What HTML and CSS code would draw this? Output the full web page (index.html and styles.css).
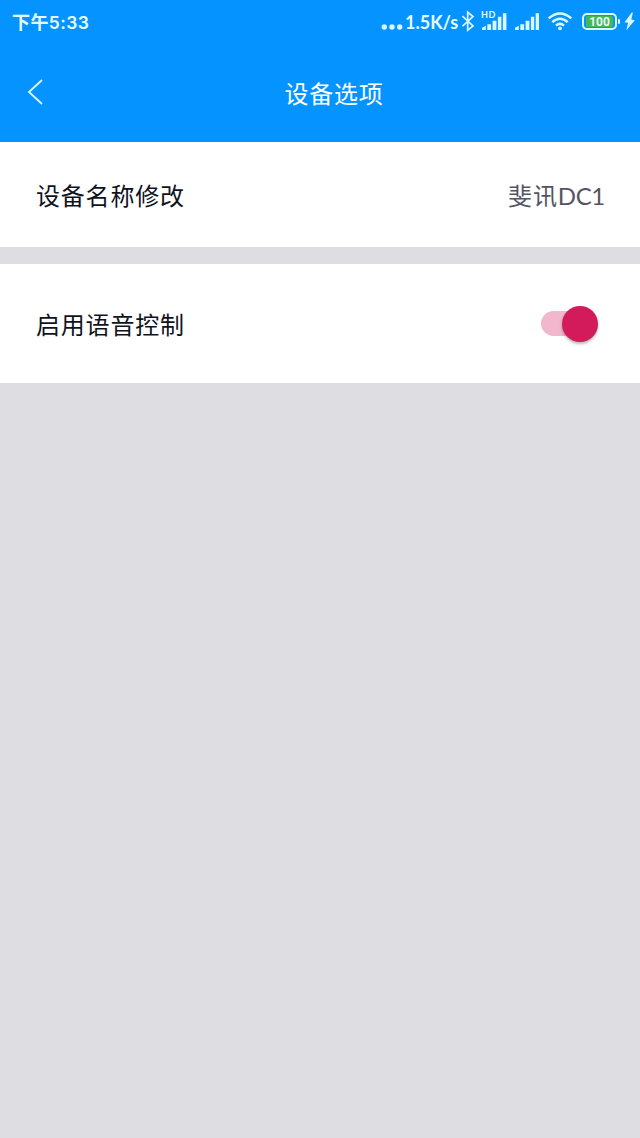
FILE: index.html
```html
<!DOCTYPE html>
<html lang="zh-CN">
<head>
<meta charset="utf-8">
<title>设备选项</title>
<link rel="stylesheet" href="styles.css">
</head>
<body>
<header class="header">
  <div class="status">
    <span class="clock">下午<span class="time">5:33</span></span>
    <div class="indicators">
      <svg class="dots" width="22" height="44" viewBox="0 0 22 44"><circle cx="3.3" cy="27" r="2.7"/><circle cx="11" cy="27" r="2.7"/><circle cx="18.7" cy="27" r="2.7"/></svg>
      <span class="speed">1.5K/s</span>
      <svg class="bluetooth" width="14" height="44" viewBox="0 0 14 44"><path d="M1.5 16.2 12 26 6.7 30.3V12.1L12 16.5 1.5 26.2"/></svg>
      <div class="signal-hd">
        <span class="hd">HD</span>
        <svg width="26" height="44" viewBox="0 0 26 44"><path d="M1 30v-2.3l3.8-2V30zM6.3 24.3h3.8V30H6.3zM11.6 20.8h3.8V30h-3.8zM16.9 16.8h3.5V30h-3.5zM21.9 13.2h3.5V30h-3.5z"/></svg>
      </div>
      <svg class="signal-plain" width="26" height="44" viewBox="0 0 26 44"><path d="M1 30v-2.3l3.8-2V30zM6.3 24.3h3.8V30H6.3zM11.6 20.8h3.8V30h-3.8zM16.9 16.8h3.3V30h-3.3zM21.7 13.2H25V30h-3.3z"/></svg>
      <svg class="wifi" width="26" height="44" viewBox="0 0 26 44"><path d="M1.7 18.4Q13 8.5 24.3 18.4M5.3 22.1Q13 15.3 20.7 22.1M9 25.6Q13 22.2 17 25.6"/><circle cx="13" cy="28.3" r="1.9"/></svg>
      <div class="battery"><span class="charge">100</span></div>
      <svg class="bolt" width="12" height="44" viewBox="0 0 12 44"><path d="M7.8 12.5.5 22.2l3.6.6L2.4 30.2l8.4-10-3.5-.8 1.6-6.9z"/></svg>
    </div>
  </div>
  <nav class="titlebar">
    <svg class="back" width="18" height="28" viewBox="0 0 18 28"><path d="M15 2 2 14l13 12"/></svg>
    <h1 class="title">设备选项</h1>
  </nav>
</header>
<main class="options">
  <div class="row row-name">
    <span class="label">设备名称修改</span>
    <span class="value">斐讯<span class="model">DC1</span></span>
  </div>
  <div class="row row-voice">
    <span class="label">启用语音控制</span>
    <div class="switch"><div class="thumb"></div></div>
  </div>
</main>
</body>
</html>
```
FILE: styles.css
```css
* { box-sizing: border-box; }
body {
  margin: 0;
  min-height: 1138px;
  background: #dedde2;
  font-family: Lato, "Noto Sans CJK SC", sans-serif;
}
.header {
  height: 142px;
  background: #0594ff;
  color: #fff;
}
.status {
  display: flex;
  justify-content: space-between;
  height: 44px;
  padding: 0 4px 0 12px;
  color: #e5fbff;
}
.clock {
  font: 700 18px/43px "Noto Sans CJK SC", sans-serif;
  letter-spacing: 0.4px;
}
.time {
  font: 600 17.5px/43px Inter, sans-serif;
}
.indicators {
  display: flex;
  align-items: center;
}
.indicators svg { display: block; fill: #d9f7ff; }
.speed {
  width: 53px;
  margin: 0 4px 0 2px;
  font: 700 18px/42px Lato, sans-serif;
  white-space: nowrap;
}
.indicators .bluetooth { margin-left: -1px; fill: none; stroke: #d9f7ff; stroke-width: 1.7; }
.signal-hd {
  position: relative;
  margin-left: 6px;
}
.hd {
  position: absolute;
  top: 10px;
  left: 0;
  font: 700 9px/10px Lato, sans-serif;
  letter-spacing: 0.5px;
}
.signal-plain { margin-left: 7px; }
.wifi { margin-left: 7px; }
.indicators .wifi path { fill: none; stroke: #d9f7ff; stroke-width: 2.5; }
.battery {
  position: relative;
  width: 35px;
  height: 17px;
  margin: 0 7px 2px 9px;
  padding: 1px 2px;
  border: 2px solid #d9f7ff;
  border-radius: 5px;
}
.battery::after {
  content: "";
  position: absolute;
  top: 4px;
  right: -5px;
  width: 2px;
  height: 5px;
  border-radius: 1px;
  background: #d9f7ff;
}
.charge {
  display: block;
  height: 11px;
  border-radius: 2px;
  background: #45b950;
  font: 700 12px/12px Roboto, sans-serif;
  text-align: center;
}
.titlebar {
  display: grid;
  grid-template-columns: 28px 1fr;
  align-items: center;
  height: 98px;
  padding: 0 27px 2px 27px;
}
.back {
  fill: none;
  stroke: #def8ff;
  stroke-width: 1.8;
}
.title {
  margin: 0;
  padding-top: 1px;
  text-align: center;
  font: 400 24px/36px "Noto Sans CJK SC", sans-serif;
  letter-spacing: 0.8px;
}
.row {
  display: flex;
  align-items: center;
  justify-content: space-between;
  padding: 0 36px;
  background: #fff;
}
.row-name { height: 105px; padding-right: 35px; }
.row-voice { height: 119px; margin-top: 17px; padding-right: 42px; }
.label {
  color: #10131d;
  font-size: 24px;
  letter-spacing: 0.8px;
}
.value {
  color: #555465;
  font-size: 24px;
  letter-spacing: 0.8px;
}
.model { letter-spacing: -0.3px; }
.switch {
  display: flex;
  align-items: center;
}
.switch::before {
  content: "";
  width: 41px;
  height: 25px;
  margin-right: -20px;
  border-radius: 13px;
  background: #f1b7cc;
}
.thumb {
  width: 36px;
  height: 36px;
  border-radius: 50%;
  background: #d31b5c;
  box-shadow: 0 2px 3px rgba(0, 0, 0, 0.28);
}
```
